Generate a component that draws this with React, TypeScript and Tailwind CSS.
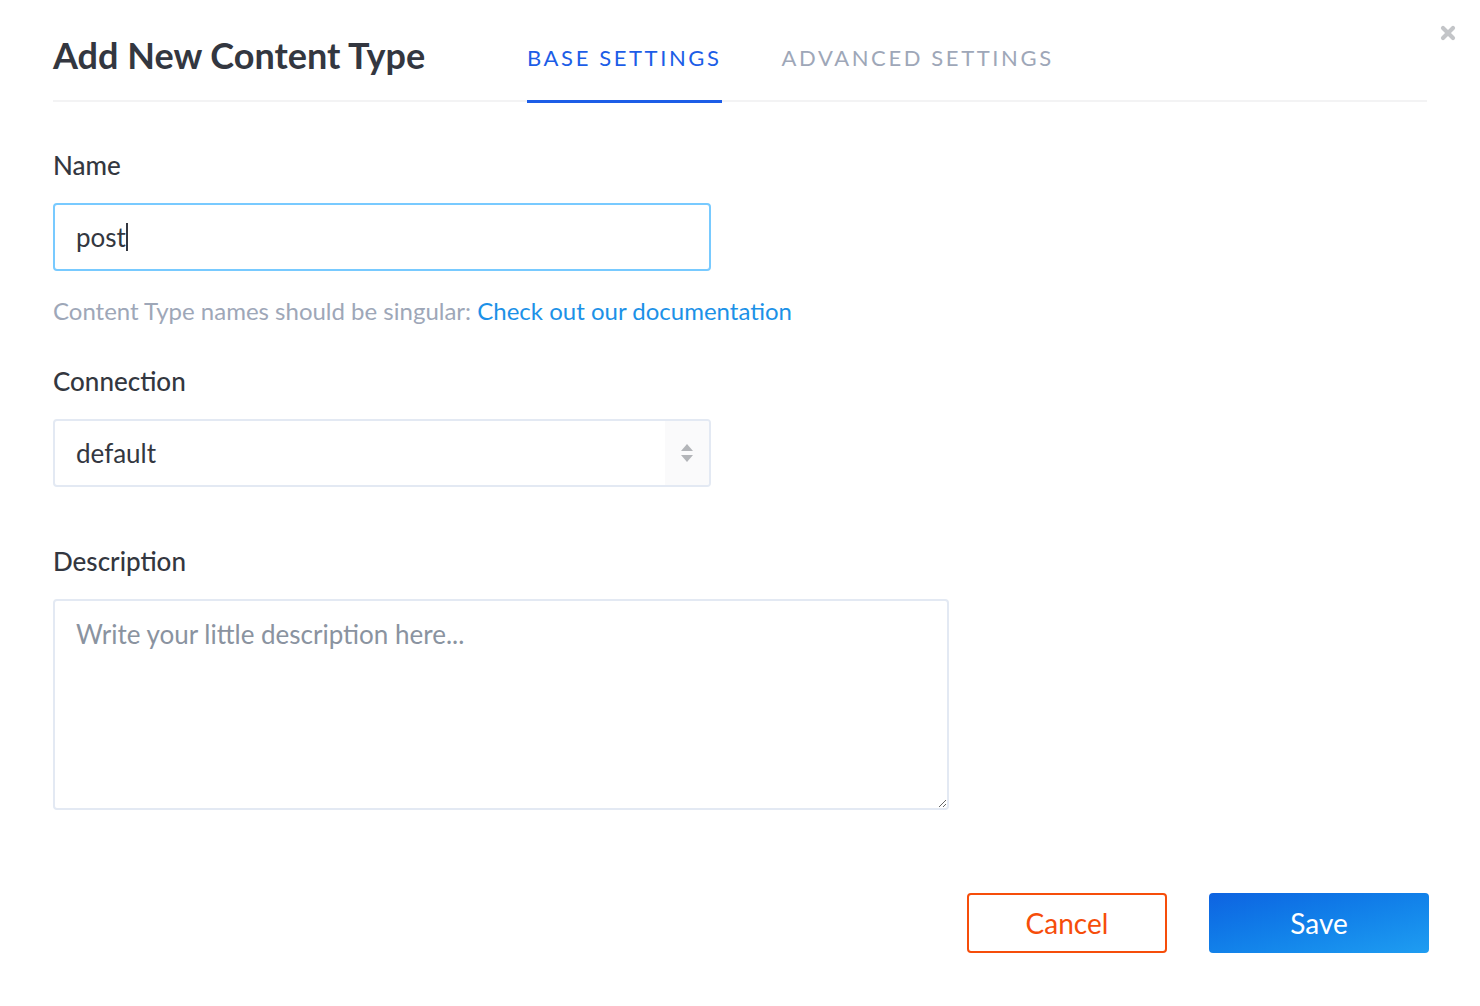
import React from 'react';

const CloseIcon: React.FC = () => (
  <svg width="16" height="16" viewBox="0 0 16 16" className="block">
    <path d="M3 3 L13 13 M13 3 L3 13" stroke="#c3c5c8" strokeWidth="4.2" strokeLinecap="round" />
  </svg>
);

const SelectArrows: React.FC = () => (
  <svg width="14" height="22" viewBox="0 0 14 22" className="block">
    <path d="M1 9 L7 2 L13 9 Z" fill="#b3b5b9" />
    <path d="M1 13 L7 20 L13 13 Z" fill="#b3b5b9" />
  </svg>
);

const Label: React.FC<{ children: React.ReactNode; className?: string }> = ({ children, className }) => (
  <div className={`text-[26px] leading-[30px] font-medium text-[#333740] ${className ?? ''}`}>{children}</div>
);

export default function App() {
  return (
    <div className="relative min-h-screen bg-white px-[53px] font-[Lato,sans-serif] text-[#333740]">
      <button className="absolute right-[24px] top-[25px]" aria-label="Close">
        <CloseIcon />
      </button>

      {/* header with tabs */}
      <div className="flex h-[102px] items-start border-b-2 border-[#f3f3f4]">
        <h1 className="mt-[34px] w-[474px] text-[36px] leading-[43px] font-bold text-[#333740]">
          Add New Content Type
        </h1>
        <button className="flex h-[103px] items-start border-b-[3px] border-[#1c5de7] pt-[45px] text-[22px] leading-[26px] tracking-[2.6px] text-[#1c5de7]">
          BASE SETTINGS
        </button>
        <button className="ml-[60px] flex h-[100px] items-start pt-[45px] text-[22px] leading-[26px] tracking-[2.6px] text-[#9ea7b8]">
          ADVANCED SETTINGS
        </button>
      </div>

      {/* form */}
      <div className="flex flex-col">
        <Label className="mt-[48px]">Name</Label>
        <div className="mt-[23px] flex h-[68px] w-[658px] items-center rounded-[4px] border-2 border-[#78caff] pl-[21px] text-[26px] text-[#333740]">
          <span>post</span>
          <span className="h-[28px] w-[2px] bg-[#333740]" />
        </div>
        <p className="mt-[25px] text-[24px] leading-[29px] text-[#9ea7b8]">
          Content Type names should be singular:{' '}
          <a className="text-[#1c91e7]">Check out our documentation</a>
        </p>

        <Label className="mt-[41px]">Connection</Label>
        <div className="mt-[23px] flex h-[68px] w-[658px] items-stretch overflow-hidden rounded-[4px] border-2 border-[#e3e9f3]">
          <div className="flex flex-1 items-center pl-[21px] text-[26px] text-[#333740]">default</div>
          <div className="flex w-[44px] items-center justify-center bg-[#fafafb]">
            <SelectArrows />
          </div>
        </div>

        <Label className="mt-[59px]">Description</Label>
        <textarea
          className="mt-[23px] h-[211px] w-[896px] rounded-[4px] border-2 border-[#e3e9f3] px-[21px] pt-[17px] text-[26px] leading-[32px] text-[#333740] outline-none placeholder:text-[#8a93a0]"
          placeholder="Write your little description here..."
        />

        <div className="mr-[-2px] mt-[83px] flex justify-end gap-[42px]">
          <button className="h-[60px] w-[200px] rounded-[4px] border-2 border-[#f64d0a] text-[28px] text-[#f64d0a]">
            Cancel
          </button>
          <button className="h-[60px] w-[220px] rounded-[4px] bg-linear-to-br from-[#0f63e1] to-[#1f9df1] text-[28px] text-white">
            Save
          </button>
        </div>
      </div>
    </div>
  );
}
